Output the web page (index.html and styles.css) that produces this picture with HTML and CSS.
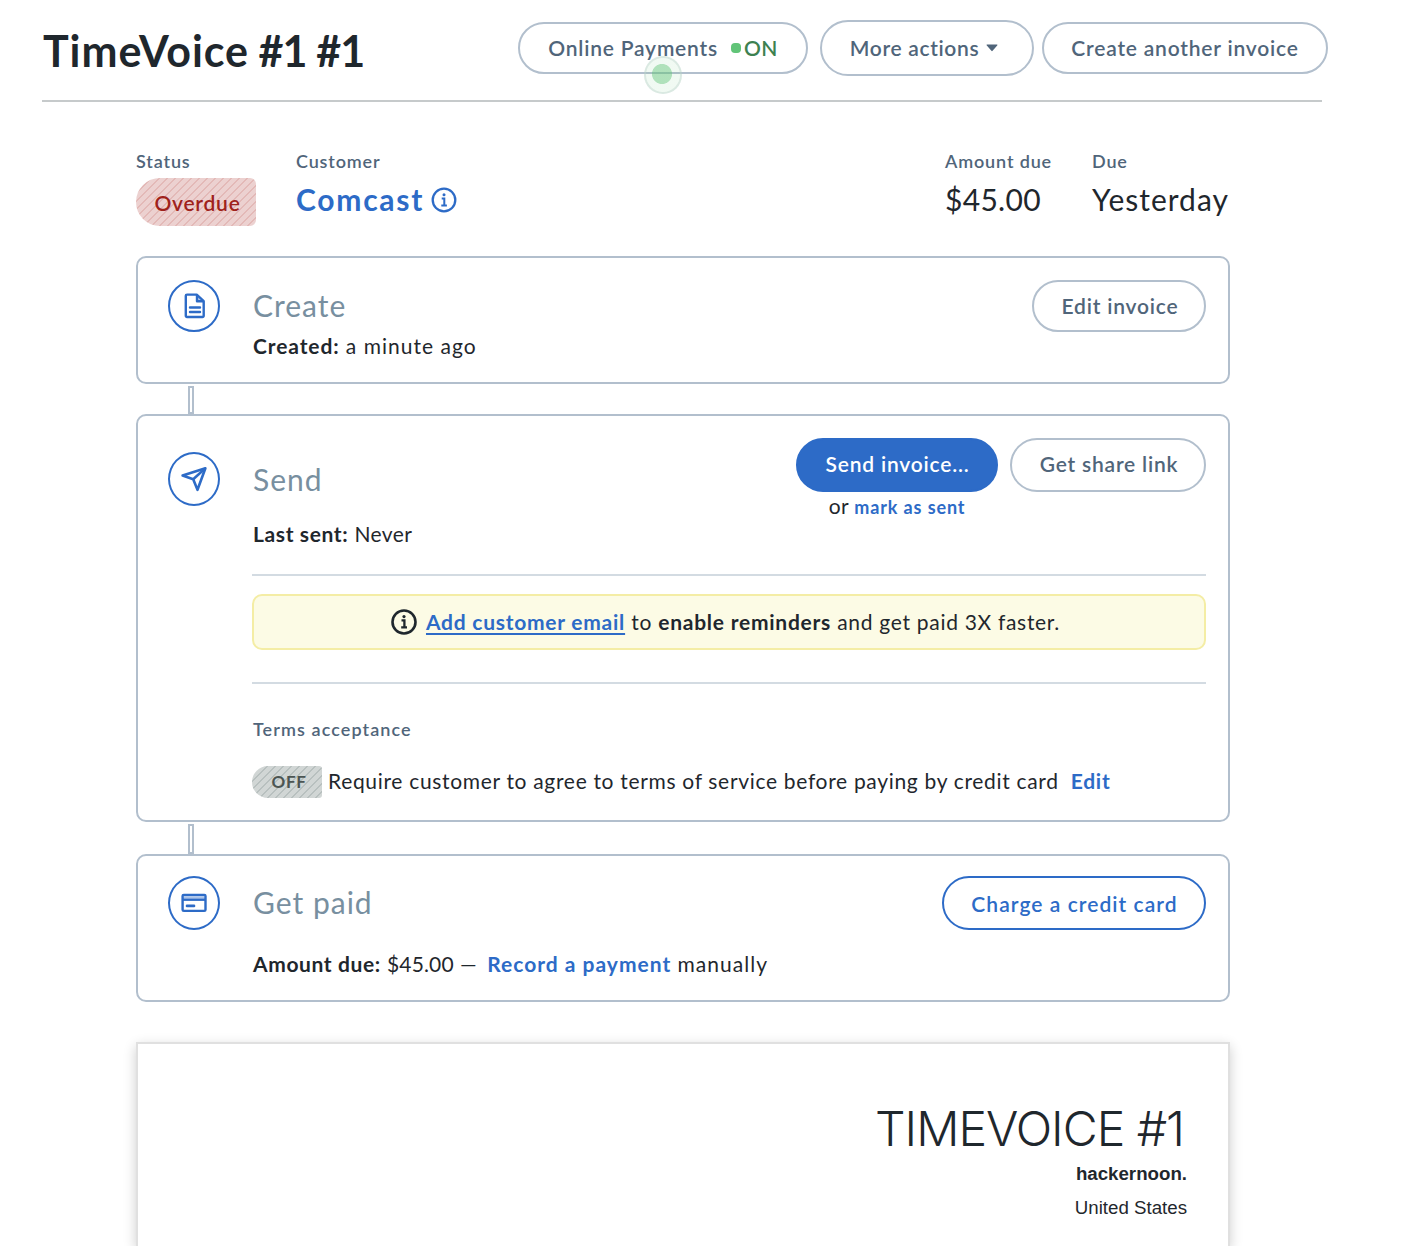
FILE: index.html
```html
<!DOCTYPE html>
<html lang="en">
<head>
<meta charset="utf-8">
<title>TimeVoice #1</title>
<link rel="stylesheet" href="styles.css">
</head>
<body>
<header class="page-header">
  <h1 class="page-title"><span class="name">TimeVoice</span> #1 #1</h1>
  <div class="header-actions">
    <button class="btn btn-payments"><span>Online Payments</span><i class="dot"></i><span class="on">ON</span><span class="pulse"></span></button>
    <button class="btn btn-more"><span>More actions</span><svg class="caret" width="12" height="8" viewBox="0 0 12 8"><path d="M1.2 .5h9.6c.6 0 .8.6.4 1L6.600 6.800a.8.8 0 0 1-1.200 0L.8 1.500c-.4-.4-.2-1 .4-1z" fill="currentColor"/></svg></button>
    <button class="btn btn-another">Create another invoice</button>
  </div>
</header>

<main class="content">
  <section class="summary">
    <div class="field field-status">
      <span class="label">Status</span>
      <span class="badge badge-overdue">Overdue</span>
    </div>
    <div class="field">
      <span class="label">Customer</span>
      <a class="value customer"><span>Comcast</span>
        <svg width="26" height="26" viewBox="0 0 26 26" fill="none" stroke="currentColor"><circle cx="13" cy="13" r="11.300" stroke-width="2.300"/><path d="M10.700 11.400h2.600v6.800M10.300 18.400h5.600" stroke-width="2"/><circle cx="13" cy="7.700" r="1.500" fill="currentColor" stroke="none"/></svg>
      </a>
    </div>
    <div class="field field-amount">
      <span class="label">Amount due</span>
      <span class="value amount">$45.00</span>
    </div>
    <div class="field field-due">
      <span class="label">Due</span>
      <span class="value">Yesterday</span>
    </div>
  </section>

  <section class="card card-create">
    <div class="step-icon">
      <svg width="26" height="26" viewBox="0 0 26 26" fill="none" stroke="currentColor" stroke-width="2.400" stroke-linejoin="round"><path d="M6 1.600h9.700l7 6.500v14.700a1.200 1.200 0 0 1-1.200 1.200H6a1.200 1.200 0 0 1-1.200-1.200V2.800A1.200 1.200 0 0 1 6 1.600z"/><path d="M16 2v6.300H22"/><path d="M16 3v5.200h5.200z" fill="currentColor" fill-opacity=".35" stroke="none"/><path d="M9 14.500h10M9 19h10" stroke-linecap="round"/></svg>
    </div>
    <div class="step-body">
      <div class="step-head"><h2>Create</h2><button class="btn btn-edit">Edit invoice</button></div>
      <p class="line"><b>Created:</b> <span class="wide">a minute ago</span></p>
    </div>
  </section>

  <div class="connector"></div>

  <section class="card card-send">
    <div class="step-icon">
      <svg width="28" height="28" viewBox="0 0 28 28" fill="none" stroke="currentColor" stroke-width="2.600" stroke-linejoin="round"><path d="M25.400 3.200L2.600 10.600l10.600 3.600 4.300 10.600z"/><path d="M25.200 3.400L13.200 14.200"/></svg>
    </div>
    <div class="step-body">
      <div class="step-head">
        <h2>Send</h2>
        <div class="send-col">
          <button class="btn btn-send">Send invoice...</button>
          <p class="or">or <a class="mark">mark as sent</a></p>
        </div>
        <button class="btn btn-share">Get share link</button>
      </div>
      <p class="line"><b class="last">Last sent:</b> <span class="never">Never</span></p>
      <hr>
      <div class="alert">
        <svg width="26" height="26" viewBox="0 0 26 26" fill="none" stroke="currentColor"><circle cx="13" cy="13" r="11.500" stroke-width="2.600"/><path d="M10.500 11.300h2.900v6.800M10.200 18.400h5.800" stroke-width="2.300"/><circle cx="13" cy="7.600" r="1.600" fill="currentColor" stroke="none"/></svg>
        <p><a class="underlined">Add customer email</a> to <b>enable reminders</b> <span class="body-tight">and get paid 3X faster.</span></p>
      </div>
      <hr>
      <p class="label terms-label">Terms acceptance</p>
      <div class="terms">
        <span class="badge badge-off">OFF</span>
        <span class="terms-text">Require customer to agree to terms of service before paying by credit card</span>
        <a>Edit</a>
      </div>
    </div>
  </section>

  <div class="connector connector-tall"></div>

  <section class="card card-paid">
    <div class="step-icon">
      <svg width="26" height="20" viewBox="0 0 26 20" fill="none" stroke="currentColor" stroke-width="2.400"><rect x="1.600" y="1.900" width="22.900" height="16" rx="1.200"/><path d="M2 6.700h22"/><path d="M2.500 4.300h21" stroke-opacity=".4"/><path d="M6 12.900h7" stroke-linecap="round" stroke-width="2.600"/></svg>
    </div>
    <div class="step-body">
      <div class="step-head"><h2>Get paid</h2><button class="btn btn-charge">Charge a credit card</button></div>
      <p class="line"><b class="due">Amount due:</b> <span class="money">$45.00</span> <span class="dash">—</span> <a class="record">Record a payment</a> <span class="wide">manually</span></p>
    </div>
  </section>

  <article class="paper">
    <h2 class="paper-title">TIMEVOICE #1</h2>
    <p><b>hackernoon.</b></p>
    <p>United States</p>
  </article>
</main>
</body>
</html>
```
FILE: styles.css
```css
:root {
  --ink: #1f272d;
  --slate: #50657a;
  --muted: #788fa0;
  --line: #b2bfcd;
  --blue: #2d6bc7;
}
* { box-sizing: border-box; margin: 0; }
body {
  height: 1246px;
  overflow: hidden;
  background: #fff;
  color: var(--ink);
  font: 400 21px/30px Lato, sans-serif;
  letter-spacing: .75px;
  white-space: nowrap;
}
a, b { font-weight: 700; }
a { color: var(--blue); }

.page-header {
  display: flex;
  justify-content: space-between;
  width: 1280px;
  height: 102px;
  margin-left: 42px;
  border-bottom: 2px solid #c6cacb;
}
.page-title {
  padding: 21px 0 0 1px;
  font-size: 43px;
  line-height: 60px;
  letter-spacing: -.9px;
}
.name { letter-spacing: .95px; }
.header-actions {
  display: flex;
  align-items: center;
  height: 96px;
  margin-right: -6px;
}

.btn {
  display: flex;
  flex: none;
  align-items: center;
  justify-content: center;
  height: 52px;
  padding: 0;
  border: 2px solid var(--line);
  border-radius: 27px;
  background: #fff;
  color: var(--slate);
  font: 600 21px/30px Lato, sans-serif;
  letter-spacing: .8px;
}
.btn-payments { position: relative; width: 290px; margin-right: 12px; }
.btn-more { width: 214px; height: 56px; margin-right: 8px; padding-right: 6px; letter-spacing: .67px; border-radius: 28px; }
.btn-another { width: 286px; }
.btn-edit { width: 174px; padding-left: 2px; }
.btn-send { width: 202px; height: 54px; padding: 0 0 2px 1px; border-color: var(--blue); background: var(--blue); color: #fff; }
.btn-share { width: 196px; height: 54px; padding: 0 0 2px 2px; }
.btn-charge { width: 264px; height: 54px; padding: 2px 0 0 1px; border-color: var(--blue); color: var(--blue); letter-spacing: 1.05px; }
.dot { width: 10px; height: 10px; margin: 0 3px 0 13px; border-radius: 4px; background: #61c478; }
.on { color: #3d8150; letter-spacing: .4px; }
.caret { margin-left: 7px; }
.pulse {
  position: absolute;
  left: 124px;
  top: 32px;
  width: 38px;
  height: 38px;
  border: 2px solid rgba(190, 212, 205, .45);
  border-radius: 50%;
  background: radial-gradient(circle at 16px 16px, rgba(97, 196, 120, .5) 9.6px, rgba(97, 196, 120, .09) 10.400px);
}

.content { width: 1094px; margin-left: 136px; }
.summary { display: flex; height: 154px; padding-top: 47px; }
.field { display: flex; flex-direction: column; }
.field-status { width: 160px; }
.field-amount { width: 147px; margin-left: auto; }
.field-due { width: 138px; }
.label { color: var(--slate); font-size: 18px; font-weight: 600; line-height: 24px; letter-spacing: .85px; }
.value { margin-top: 5px; font-size: 30px; line-height: 42px; letter-spacing: 1px; }
.amount { letter-spacing: .3px; }
.customer { display: flex; align-items: center; gap: 7px; letter-spacing: 1.75px; }
.customer svg { margin-top: 2px; }
.badge {
  display: flex;
  align-items: center;
  justify-content: center;
}
.badge-overdue {
  width: 120px;
  height: 48px;
  margin-top: 5px;
  padding: 1px 0 0 3px;
  border-radius: 24px 6px 6px 24px;
  background: repeating-linear-gradient(135deg, #ecd1d0 0 4.650px, #e3b9b7 4.650px 5.657px);
  color: #9f221b;
  font-weight: 600;
}
.badge-off {
  width: 70px;
  height: 32px;
  padding-left: 4px;
  border-radius: 16px 3px 3px 16px;
  background: repeating-linear-gradient(135deg, #d1d6d5 0 4.650px, #b8c0bf 4.650px 5.657px);
  color: #4c5553;
  font-size: 17px;
  font-weight: 700;
  letter-spacing: .6px;
}

.card {
  display: grid;
  grid-template-columns: 52px 1fr;
  column-gap: 32px;
  border: 2px solid var(--line);
  border-radius: 10px;
}
.card-create { height: 128px; padding: 22px 22px 0 30px; }
.card-send { height: 408px; padding: 22px 22px 0 30px; }
.card-paid { height: 148px; padding: 20px 22px 0 30px; }
.step-icon {
  display: flex;
  align-items: center;
  justify-content: center;
  width: 52px;
  height: 54px;
  border: 2px solid var(--blue);
  border-radius: 50%;
  color: var(--blue);
}
.card-create .step-icon { height: 52px; }
.card-send .step-icon { margin-top: 14px; }
.step-body { min-width: 0; }
.step-head { display: flex; align-items: flex-start; height: 51px; }
.step-head h2 {
  margin-right: auto;
  padding-left: 1px;
  color: var(--muted);
  font-size: 30px;
  font-weight: 400;
  line-height: 50px;
  letter-spacing: 1px;
}
.card-send .step-head { height: 81px; }
.card-send h2 { padding-top: 16px; }
.card-paid .step-head { height: 54px; }
.card-paid h2 { line-height: 53px; }
.card-paid .line { margin-top: 19px; }
.line { padding-left: 1px; }
.line b { letter-spacing: .9px; }
.line .last, .line .due { letter-spacing: .62px; }
.never { letter-spacing: .43px; }
.money { letter-spacing: .15px; }
.dash { letter-spacing: 4.5px; }
.record { letter-spacing: 1px; }
.wide { letter-spacing: 1.04px; }
.send-col { margin-right: 12px; }
.or { margin-top: -1px; text-align: center; letter-spacing: .4px; }
.mark { font-size: 18px; letter-spacing: .87px; }

hr { height: 2px; border: 0; background: #d3dbe2; }
.card-send .line { margin-bottom: 25px; }
.alert {
  display: flex;
  align-items: center;
  justify-content: center;
  gap: 9px;
  height: 56px;
  margin: 18px 0 32px;
  padding-right: 7px;
  border: 2px solid #f4eda5;
  border-radius: 10px;
  background: #fcfbe5;
}
.underlined { text-decoration: underline; text-decoration-thickness: 2px; text-underline-offset: 3px; text-decoration-skip-ink: none; }
.body-tight { letter-spacing: .7px; }
.terms-label { margin: 33px 0 25px; padding-left: 1px; letter-spacing: 1.08px; }
.terms { display: flex; align-items: center; height: 32px; }
.terms-text, .terms a { padding-bottom: 2px; }
.terms-text { margin: 0 12px 0 6px; letter-spacing: .68px; }

.connector { width: 6px; height: 28px; margin: 2px 0 0 52px; border: 2px solid var(--line); }
.connector-tall { height: 30px; }

.paper {
  height: 204px;
  margin-top: 40px;
  padding: 56px 41px 0 0;
  border: 2px solid #e0e0e0;
  border-bottom: 0;
  box-shadow: 0 4px 12px rgba(0, 0, 0, .2);
  font: 400 18.7px/34px "Liberation Sans", Arial, sans-serif;
  letter-spacing: 0;
  text-align: right;
}
.paper-title { padding-right: 3px; font: 300 48px/57px Inter, sans-serif; letter-spacing: -1px; }
```
